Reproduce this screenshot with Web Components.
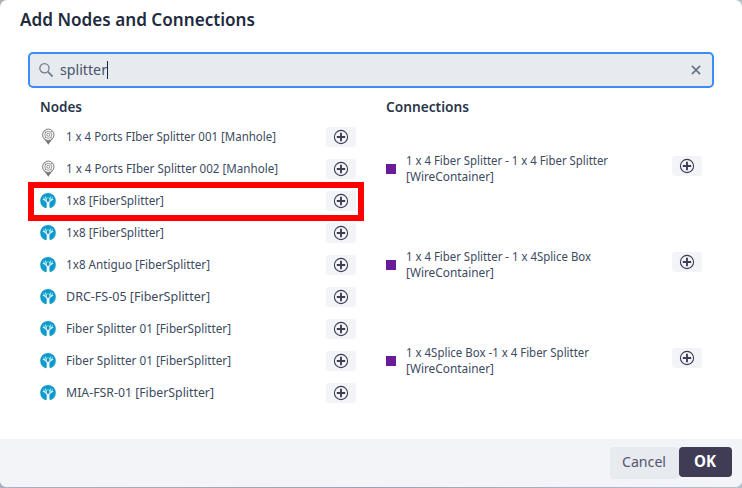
<!DOCTYPE html>
<html lang="en"><head><meta charset="utf-8"><title>Add Nodes and Connections</title>
<style>
html,body{margin:0;height:100%;overflow:hidden}
body{background:linear-gradient(90deg,#a9b0c0,#9ba3b8 50%,#b5c0cc);font-family:"Noto Sans","Open Sans",sans-serif;color:#3c4a60}
</style></head><body>
<add-dialog></add-dialog>
<script>
// Single-line label whose glyph run is condensed to a given width.
class FitText extends HTMLElement{
  connectedCallback(){
    const w=+this.getAttribute('w');
    this.attachShadow({mode:'open'}).innerHTML=`<style>:host{display:block;white-space:pre;width:${w}px;flex:none}span{display:inline-block;transform-origin:0 50%}</style><span><slot></slot></span>`;
    const s=this.shadowRoot.querySelector('span');
    s.style.transform=`scaleX(${w/s.getBoundingClientRect().width})`;
  }
}
class NodeIcon extends HTMLElement{
  connectedCallback(){
    const pin=`<svg width="16" height="18" viewBox="0 0 16 18" fill="none" stroke="#777" stroke-width="1"><path d="M4 10.6 8.3 16.8 12.6 10.6Z" fill="#777" stroke="none"/><circle cx="8.3" cy="6.8" r="5.7" fill="#fff"/><circle cx="8.3" cy="6.8" r="3.5" stroke-width=".8"/><circle cx="8.3" cy="6.8" r="1.5" stroke-width=".8"/><path d="M4.4 2.9l1.5 1.5M12.2 2.9l-1.5 1.5M4.4 10.7l1.5-1.5M12.2 10.7l-1.5-1.5" stroke-width=".7"/></svg>`;
    const tree=`<svg width="16" height="18" viewBox="0 0 16 18"><circle cx="8" cy="8.8" r="7.8" fill="#0d9bcb"/><path d="M6.1 17.2C6.9 14.5 6.9 12.4 6.7 10.6L8 9.6 9.4 10.6C9.2 12.5 9.3 14.5 10.2 17.2Z" fill="#fff"/><g fill="none" stroke="#d9f1fa" stroke-linecap="round"><path d="M7.4 11.2C6.8 9.2 5 8.2 3.3 7.2M8.7 11.2C9.3 9.2 11 8.2 12.7 7.2" stroke-width="1.2"/><path d="M6.4 9.1 5.4 4.8M9.7 9.1 10.8 4.8M4.6 7.9 3.9 5.9M11.4 7.9 12.3 5.9M6.1 7.6 7.2 5.8M10 7.6 9 5.8" stroke-width=".8"/></g></svg>`;
    this.attachShadow({mode:'open'}).innerHTML=`<style>:host{display:block;width:16px;height:18px;flex:none}svg{display:block}</style>`+(this.getAttribute('kind')==='pin'?pin:tree);
  }
}
class AddButton extends HTMLElement{
  connectedCallback(){
    this.attachShadow({mode:'open'}).innerHTML=`<style>:host{display:block;flex:none}button{display:flex;align-items:center;justify-content:center;width:30px;height:20px;padding:0;border:0;border-radius:3px;background:#f3f4f7}svg{display:block}</style><button aria-label="Add"><svg width="16" height="16" viewBox="0 0 16 16" fill="none" stroke="#403c56"><circle cx="8" cy="8" r="6.6" stroke-width="1.1"/><path d="M8 3.8v8.4M3.8 8h8.4" stroke-width="1.9"/></svg></button>`;
  }
}
class NodeRow extends HTMLElement{
  connectedCallback(){
    const hot=this.hasAttribute('marked');
    this.attachShadow({mode:'open'}).innerHTML=`<style>:host{display:flex;align-items:center;height:32px;width:316px;position:relative;font-size:12.5px;line-height:18px}
    fit-text{margin-left:10px;margin-right:auto}
    .mark{position:absolute;left:-12px;top:-3px;width:336px;height:39px;box-sizing:border-box;border:6px solid #f00;z-index:1}</style>
    <node-icon kind="${this.getAttribute('kind')}"></node-icon><fit-text w="${this.getAttribute('w')}">${this.textContent}</fit-text><add-button></add-button>${hot?'<div class="mark"></div>':''}`;
  }
}
class LinkRow extends HTMLElement{
  connectedCallback(){
    this.attachShadow({mode:'open'}).innerHTML=`<style>:host{display:flex;align-items:center;height:96px;width:316px;font-size:12.5px;line-height:16px}
    i{width:10px;height:10px;background:#6a1b9a;margin-right:10px}.t{margin-right:auto}add-button{margin-bottom:6px}</style>
    <i></i><div class="t"><fit-text w="${this.getAttribute('w')}">${this.textContent}</fit-text><fit-text w="88">[WireContainer]</fit-text></div><add-button></add-button>`;
  }
}
class SearchBox extends HTMLElement{
  connectedCallback(){
    this.attachShadow({mode:'open'}).innerHTML=`<style>:host{display:flex;align-items:center;box-sizing:border-box;height:36px;border:2px solid #3c8cfa;border-radius:5px;background:#e7eaef;padding:0 9px 0 8px;font-size:15px;line-height:20px;color:#46536a}
    fit-text{margin-left:6px;margin-bottom:2px}.caret{width:1px;height:18px;background:#1c293b;margin-right:auto}svg{display:block}</style>
    <svg width="16" height="16" viewBox="0 0 16 16" fill="none" stroke="#728093"><circle cx="6.4" cy="6.3" r="4.6" stroke-width="1.3"/><path d="M9.8 9.7 14.6 14.5" stroke-width="1.8"/></svg>
    <fit-text w="47">splitter</fit-text><div class="caret"></div>
    <svg width="14" height="14" viewBox="0 0 14 14" stroke="#667488" stroke-width="1.7"><path d="M2.9 2.9l8.2 8.2M11.1 2.9l-8.2 8.2"/></svg>`;
  }
}
class DialogFooter extends HTMLElement{
  connectedCallback(){
    this.attachShadow({mode:'open'}).innerHTML=`<style>:host{display:flex;justify-content:flex-end;align-items:flex-start;box-sizing:border-box;height:48px;padding:8px 10px 0;background:#f3f4f7}
    button{box-sizing:border-box;display:flex;align-items:center;justify-content:center;border:0;padding:0;font-family:inherit;font-size:15px;line-height:20px;border-radius:4px}
    .c{width:69px;height:32px;background:#e7eaee;color:#55536e;padding:0 2px 4px 0}.o{width:53px;height:30px;background:#403c56;color:#fff;font-weight:700;font-size:16px;padding:0 1px 3px 0}</style>
    <button class="c"><fit-text w="44">Cancel</fit-text></button><button class="o"><fit-text w="22">OK</fit-text></button>`;
  }
}
class AddDialog extends HTMLElement{
  connectedCallback(){
    const nodes=[['pin',210,'1 x 4 Ports FIber Splitter 001 [Manhole]'],['pin',212,'1 x 4 Ports FIber Splitter 002 [Manhole]'],['tree',98,'1x8 [FiberSplitter]',1],['tree',98,'1x8 [FiberSplitter]'],['tree',144,'1x8 Antiguo [FiberSplitter]'],['tree',144,'DRC-FS-05 [FiberSplitter]'],['tree',165,'Fiber Splitter 01 [FiberSplitter]'],['tree',165,'Fiber Splitter 01 [FiberSplitter]'],['tree',148,'MIA-FSR-01 [FiberSplitter]']];
    const links=[[202,'1 x 4 Fiber Splitter - 1 x 4 Fiber Splitter'],[185,'1 x 4 Fiber Splitter - 1 x 4Splice Box'],[183,'1 x 4Splice Box -1 x 4 Fiber Splitter']];
    this.attachShadow({mode:'open'}).innerHTML=`<style>:host{display:flex;flex-direction:column;height:487px;background:#fff;border-radius:7px;overflow:hidden}
    main{flex:1;padding:6px 28px 0}
    h2,h3{margin:0;font-weight:600;color:#1f2b3e}h2{font-size:17.5px;line-height:26px;margin:0 0 20px -8px}h3{font-size:14.5px;line-height:20px;margin-bottom:5px;color:#29364a}
    .cols{display:grid;grid-template-columns:316px 316px;column-gap:30px;padding:8px 0 0 12px}</style>
    <main><h2><fit-text w="235">Add Nodes and Connections</fit-text></h2><search-box></search-box>
    <div class="cols"><section><h3><fit-text w="42">Nodes</fit-text></h3>${nodes.map(n=>`<node-row kind="${n[0]}" w="${n[1]}" ${n[3]?'marked':''}>${n[2]}</node-row>`).join('')}</section>
    <section><h3><fit-text w="83">Connections</fit-text></h3>${links.map(l=>`<link-row w="${l[0]}">${l[1]}</link-row>`).join('')}</section></div></main><dialog-footer></dialog-footer>`;
  }
}
customElements.define('fit-text',FitText);
customElements.define('node-icon',NodeIcon);
customElements.define('add-button',AddButton);
customElements.define('node-row',NodeRow);
customElements.define('link-row',LinkRow);
customElements.define('search-box',SearchBox);
customElements.define('dialog-footer',DialogFooter);
customElements.define('add-dialog',AddDialog);
</script></body></html>
